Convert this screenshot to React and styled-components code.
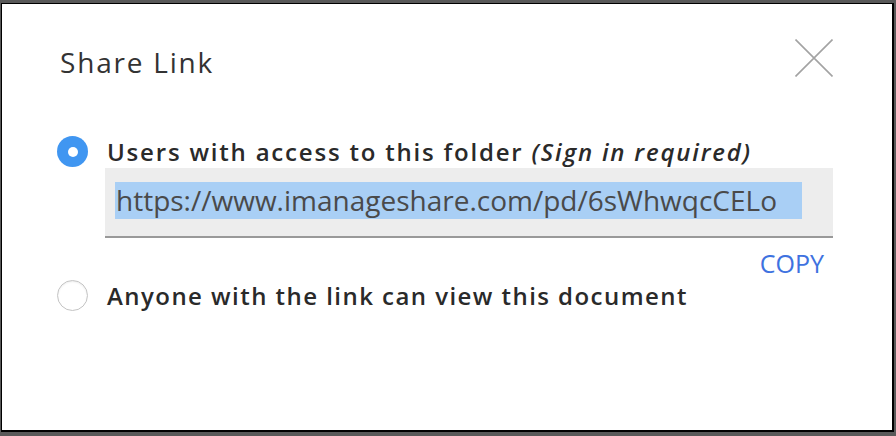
import React, { useState } from "react";
import styled, { createGlobalStyle } from "styled-components";

const GlobalStyle = createGlobalStyle`
  html, body {
    margin: 0;
    padding: 0;
    background: #595959;
    font-family: "Open Sans", "Noto Sans", sans-serif;
  }
`;

const SHARE_URL = "https://www.imanageshare.com/pd/6sWhwqcCELo";

const App = () => {
  const [choice, setChoice] = useState("folder");

  return (
    <>
      <GlobalStyle />
      <Dialog>
        <Header>
          <Title>Share Link</Title>
          <CloseButton aria-label="Close">
            <svg width="38" height="38" viewBox="0 0 38 38">
              <path d="M0.5 0.5 L37.5 37.5 M37.5 0.5 L0.5 37.5" stroke="#a3a3a3" strokeWidth="1.6" fill="none" />
            </svg>
          </CloseButton>
        </Header>

        <Option first onClick={() => setChoice("folder")}>
          <Radio checked={choice === "folder"} />
          <Label spacing={1.8}>
            Users with access to this folder <Note>(Sign in required)</Note>
          </Label>
        </Option>

        <LinkBox>
          <Selected>{SHARE_URL}</Selected>
        </LinkBox>
        <CopyRow>
          <CopyButton>COPY</CopyButton>
        </CopyRow>

        <Option onClick={() => setChoice("anyone")}>
          <Radio checked={choice === "anyone"} />
          <Label spacing={1.45}>Anyone with the link can view this document</Label>
        </Option>
      </Dialog>
    </>
  );
};

export default App;

// styled components
const Dialog = styled.div`
  box-sizing: border-box;
  height: 429px;
  margin: 3px 2px 4px 1px;
  background: #fff;
  border: 1px solid #000;
  border-right-width: 2px;
  border-bottom-width: 2px;
  padding: 35px 59px 0 58px;
  color: #333;
`;

const Header = styled.div`
  display: flex;
  justify-content: space-between;
  align-items: center;
  height: 38px;
`;

const Title = styled.h1`
  margin: 0;
  font-size: 28px;
  font-weight: 400;
  letter-spacing: 1.8px;
  color: #333;
  padding-top: 8px;
`;

const CloseButton = styled.button`
  width: 38px;
  height: 38px;
  padding: 0;
  border: none;
  background: none;
  display: flex;
  align-items: center;
  justify-content: center;
  cursor: pointer;
`;

const Option = styled.div`
  display: flex;
  align-items: center;
  gap: 19px;
  cursor: pointer;
  margin-top: ${(p) => (p.first ? 59 : 2)}px;
`;

const Radio = styled.span`
  flex: none;
  box-sizing: border-box;
  width: 31px;
  height: 31px;
  border-radius: 50%;
  margin-left: -3px;
  background: ${(p) => (p.checked ? "#4096f1" : "#fff")};
  border: ${(p) => (p.checked ? "none" : "1.5px solid #c4c4c4")};
  box-shadow: ${(p) => (p.checked ? "none" : "inset 0 1px 2px rgba(0,0,0,0.08)")};
  position: relative;
  &::after {
    content: "";
    display: ${(p) => (p.checked ? "block" : "none")};
    position: absolute;
    left: 50%;
    top: 50%;
    width: 10px;
    height: 10px;
    margin: -5px 0 0 -5px;
    border-radius: 50%;
    background: #fff;
  }
`;

const Label = styled.span`
  font-size: 24px;
  font-weight: 600;
  letter-spacing: ${(p) => p.spacing}px;
  color: #2a2a2a;
  line-height: 30px;
  white-space: nowrap;
`;

const Note = styled.em`
  font-style: italic;
`;

const LinkBox = styled.div`
  box-sizing: border-box;
  margin: 1px 0 0 45px;
  height: 70px;
  background: #ededed;
  border-bottom: 2px solid #999;
  display: flex;
  align-items: flex-start;
  padding: 14px 31px 0 10px;
`;

const Selected = styled.span`
  flex: 1;
  background: #a9cff5;
  color: #4a4a4a;
  font-size: 28px;
  line-height: 37px;
  padding-left: 1px;
  white-space: nowrap;
`;

const CopyRow = styled.div`
  display: flex;
  justify-content: flex-end;
  padding-right: 9px;
  margin-top: 10px;
`;

const CopyButton = styled.button`
  border: none;
  background: none;
  padding: 0;
  font-family: inherit;
  font-size: 25px;
  color: #3e72e0;
  line-height: 30px;
  cursor: pointer;
`;
